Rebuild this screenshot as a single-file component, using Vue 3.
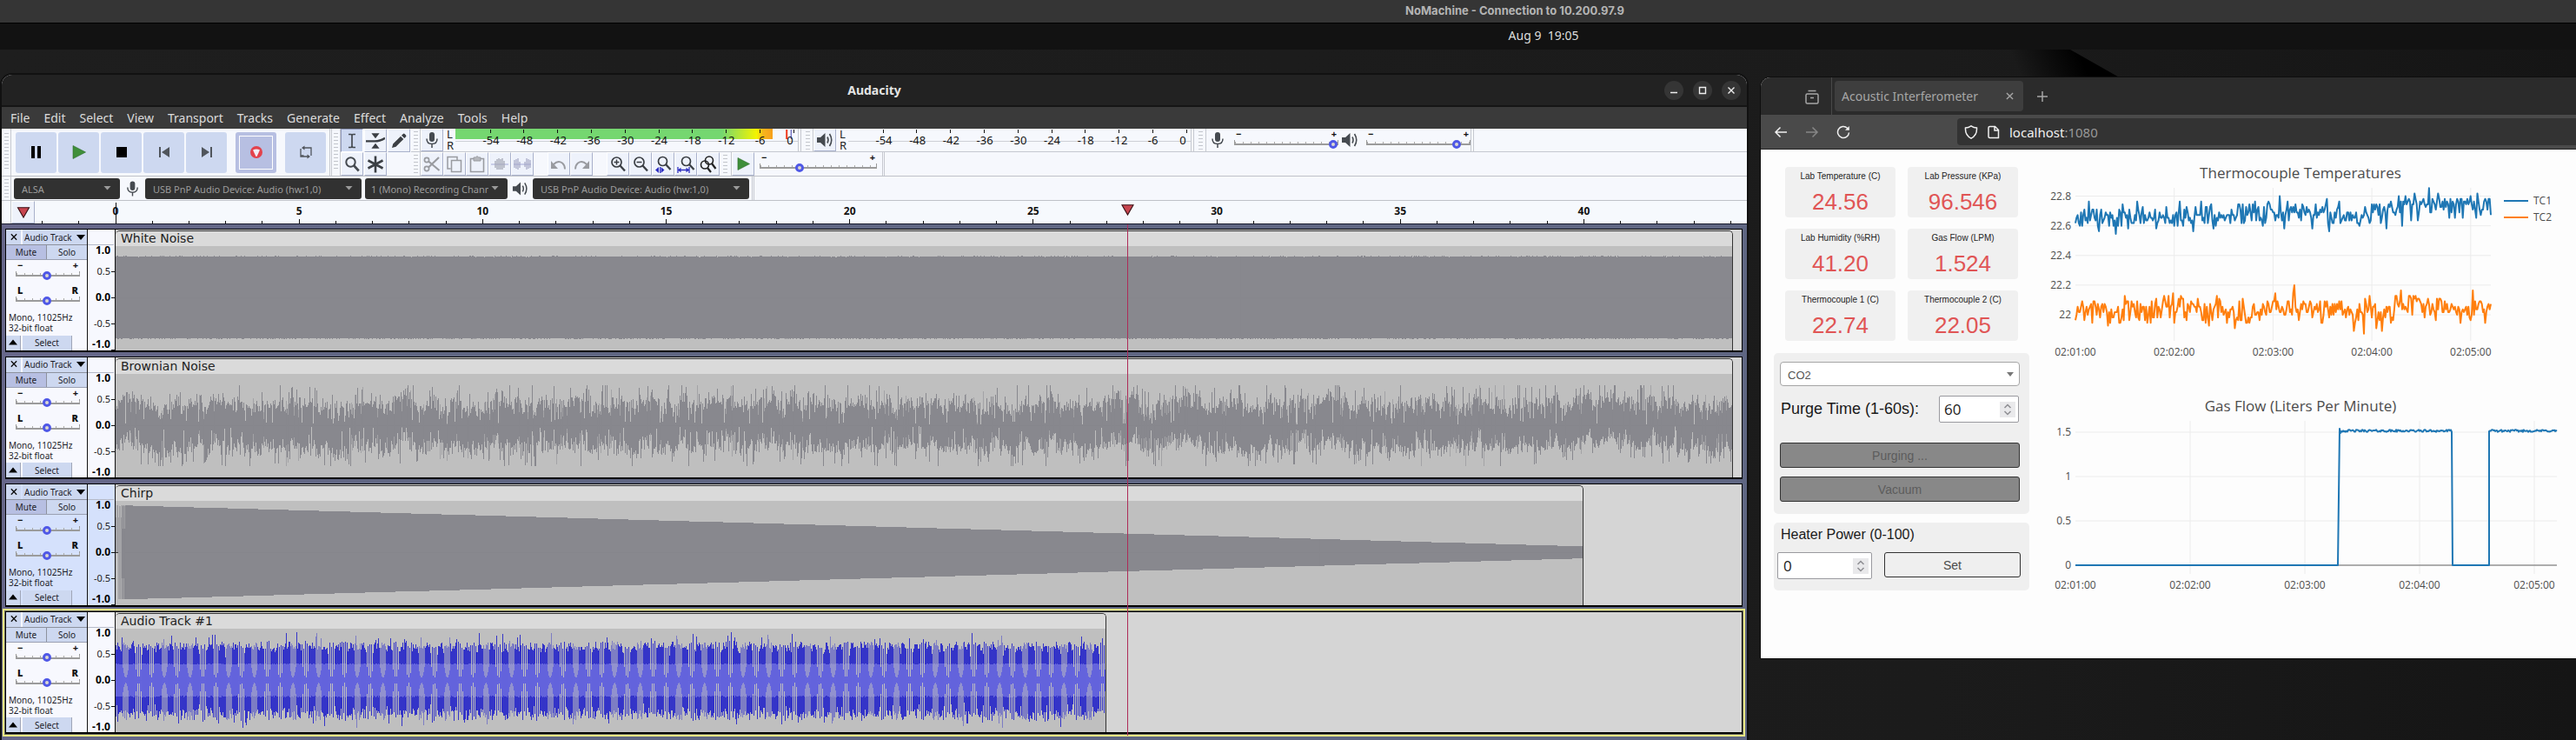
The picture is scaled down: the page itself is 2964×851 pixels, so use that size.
<script setup>
import { ref } from 'vue'

/* ---------- deterministic noise ---------- */
function makeRandom(seed) {
  let s = seed
  return () => {
    s = (s * 1664525 + 1013904223) % 4294967296
    return s / 4294967296
  }
}

/* ---------- Audacity ---------- */
const menus = ['File', 'Edit', 'Select', 'View', 'Transport', 'Tracks', 'Generate', 'Effect', 'Analyze', 'Tools', 'Help']

const transport = [
  { id: 'pause', label: 'Pause' },
  { id: 'play', label: 'Play' },
  { id: 'stop', label: 'Stop' },
  { id: 'start', label: 'Skip to Start' },
  { id: 'end', label: 'Skip to End' },
  { id: 'record', label: 'Record', apart: true, active: true },
  { id: 'loop', label: 'Loop', apart: true }
]
const tools = [
  { id: 'ibeam', label: 'Selection Tool', active: true },
  { id: 'envelope', label: 'Envelope Tool' },
  { id: 'pencil', label: 'Draw Tool' },
  { id: 'lens', label: 'Zoom Tool' },
  { id: 'star', label: 'Multi-Tool' }
]
const editGroups = [
  [
    { id: 'cut', label: 'Cut' },
    { id: 'copy', label: 'Copy' },
    { id: 'paste', label: 'Paste' },
    { id: 'trim', label: 'Trim' },
    { id: 'silence', label: 'Silence' }
  ],
  [
    { id: 'undo', label: 'Undo' },
    { id: 'redo', label: 'Redo' }
  ],
  [
    { id: 'zoomin', label: 'Zoom In' },
    { id: 'zoomout', label: 'Zoom Out' },
    { id: 'zoomsel', label: 'Zoom to Selection' },
    { id: 'zoomfit', label: 'Fit Project' },
    { id: 'zoomtoggle', label: 'Zoom Toggle' }
  ]
]

const meterMarks = [-54, -48, -42, -36, -30, -24, -18, -12, -6, 0].map((db, i) => ({
  db,
  at: ((40 + i * 38.8) / 394) * 100 + '%',
  text: ((db === 0 ? 385 : 41 + i * 38.7) / 394) * 100 + '%'
}))

const SECONDS = 44.3
const pct = (t) => (t / SECONDS) * 100 + '%'
const rulerTicks = Array.from({ length: 47 }, (_, i) => i - 2)
const playhead = 27.57

const verticalScale = [
  { text: '1.0', y: 24, bold: true },
  { text: '0.5', y: 48, tick: 48 },
  { text: '0.0', y: 78, bold: true, tick: 78 },
  { text: '-0.5', y: 108, tick: 108 },
  { text: '-1.0', y: 132, bold: true, tick: 138 }
]

function column(x, up, down) {
  return `M${x}.5 ${(-up).toFixed(1)}V${down.toFixed(1)}`
}

function whiteNoise(n) {
  const r = makeRandom(11)
  let main = ''
  for (let x = 0; x < n; x++) {
    main += column(x, 48 + (r() < 0.12 ? 1 : 0) - (r() < 0.03 ? 1 : 0), 47 + (r() < 0.3 ? 1 : 0))
  }
  return [{ kind: 'muted', d: main }]
}

function brownNoise(n) {
  const r = makeRandom(77)
  let main = ''
  let soft = ''
  let drift = 0
  for (let x = 0; x < n; x++) {
    drift = drift * 0.8 + (r() - 0.5) * 10
    let up = 17 + drift + r() * 15
    let down = 17 - drift + r() * 15
    const a = r()
    if (a < 0.13) up += 6 + r() * 18
    else if (a > 0.87) down += 6 + r() * 16
    if (r() < 0.05) up = 1 + r() * 8
    if (r() < 0.05) down = 1 + r() * 8
    up = Math.max(1, Math.min(47, up))
    down = Math.max(1, Math.min(47, down))
    if (r() < 0.1) {
      soft += column(x, up, down)
      main += column(x, up * 0.5, down * 0.5)
    } else main += column(x, up, down)
  }
  return [{ kind: 'faint', d: soft }, { kind: 'muted', d: main }]
}

function chirp(n) {
  let main = ''
  let soft = ''
  for (let x = 0; x < n; x++) {
    const amp = 55 - (48 * x) / n
    if (x < 11) {
      soft += column(x, x % 3 === 0 ? amp - 14 : x < 3 ? amp : amp - 1, x < 3 ? 0 : amp)
      if (x > 6) main += column(x, x % 2 ? amp : 28, x % 2 ? 30 : amp)
    } else main += column(x, amp, amp)
  }
  return [{ kind: 'faint', d: soft }, { kind: 'muted', d: main }]
}

function beats(n) {
  const r = makeRandom(5)
  let dark = ''
  let pale = ''
  let rms = ''
  let rmsPale = ''
  const period = 14.8
  for (let x = 0; x < n; x++) {
    const beat = Math.floor(x / period)
    const p = x - beat * period
    const blurred = (beat * 7) % 5 < 2
    const solid = p < 7.6
    const edge = solid ? Math.abs(p - 3.8) / 3.8 : 0
    let up = 41 - edge * 11 * r() + (r() - 0.5) * 9
    let down = 41 - edge * 11 * r() + (r() - 0.5) * 12
    if (r() < 0.08) up += 5 + r() * 8
    if (r() < 0.09) down += 4 + r() * 7
    const band = 18 + r() * 2
    if (solid) {
      dark += column(x, up, down)
      rms += column(x, band, band)
      continue
    }
    const q = Math.abs(p - 11.2) / 3.6
    const hollow = 3 + 14 * Math.min(1, q) * q
    if (blurred) {
      pale += column(x, up - 1, down)
      rmsPale += column(x, band, band)
      rms += column(x, hollow, hollow)
    } else if (x % 2 === 0) {
      dark += column(x, up, down)
      rms += column(x, band, band)
    } else {
      rms += column(x, hollow, hollow)
    }
  }
  return [
    { kind: 'dark', d: dark },
    { kind: 'pale', d: pale },
    { kind: 'rms-pale', d: rmsPale },
    { kind: 'rms', d: rms }
  ]
}

const tracks = ref([
  { name: 'White Noise', muted: true, length: 44.07, columns: 1861, waves: whiteNoise(1861) },
  { name: 'Brownian Noise', muted: true, length: 44.07, columns: 1861, waves: brownNoise(1861) },
  { name: 'Chirp', muted: true, selected: true, length: 40, columns: 1689, waves: chirp(1689) },
  { name: 'Audio Track #1', focused: true, length: 27, columns: 1140, waves: beats(1140) }
])

/* ---------- Dashboard ---------- */
const readings = [
  { label: 'Lab Temperature (C)', value: '24.56' },
  { label: 'Lab Pressure (KPa)', value: '96.546' },
  { label: 'Lab Humidity (%RH)', value: '41.20' },
  { label: 'Gas Flow (LPM)', value: '1.524' },
  { label: 'Thermocouple 1 (C)', value: '22.74' },
  { label: 'Thermocouple 2 (C)', value: '22.05' }
]
const gas = ref('CO2')
const purgeTime = ref(60)
const heater = ref(0)

const toPath = (pts) => 'M' + pts.map((p) => p[0].toFixed(1) + ' ' + p[1].toFixed(1)).join('L')

const tempY = (v) => 190 - (v - 22) * 170.5
function thermocouple(seed, base, rise, spikes) {
  const r = makeRandom(seed)
  const pts = []
  const n = 370
  let slow = 0
  for (let i = 0; i <= n; i++) {
    const f = i / n
    slow = slow * 0.8 + (r() - 0.5) * 0.05
    let v = base + slow + (r() + r() + r() - 1.5) * 0.085
    v += rise * Math.min(1, Math.max(0, (f - 0.66) / 0.12))
    for (const [at, to] of spikes) if (Math.abs(f - at) < 0.0014) v = to
    v = Math.round(v * 55) / 55
    pts.push([48 + f * 478, tempY(v)])
  }
  return toPath(pts)
}

const flowY = (v) => 210 - v * 102
function gasFlow() {
  const r = makeRandom(42)
  const pts = [[48, flowY(0)], [350, flowY(0)], [352, flowY(1.54)], [353, flowY(1.49)]]
  for (let x = 354; x <= 481; x++) pts.push([x, flowY(1.515 + (r() - 0.5) * 0.025)])
  pts.push([482, flowY(0)], [524, flowY(0)])
  for (let x = 524; x <= 602; x++) pts.push([x, flowY(1.515 + (r() - 0.5) * 0.025)])
  return toPath(pts)
}

const times = ['02:01:00', '02:02:00', '02:03:00', '02:04:00', '02:05:00']
const charts = [
  {
    title: 'Thermocouple Temperatures',
    right: 526,
    yTicks: [22.8, 22.6, 22.4, 22.2, 22].map((v) => ({ text: String(v), y: tempY(v) })),
    xTicks: times.map((text, i) => ({ text, x: 48 + i * 113.7 })),
    series: [
      { name: 'TC1', kind: 'blue', d: thermocouple(9, 22.67, 0.06, [[0.285, 22.57], [0.61, 22.57], [0.968, 22.81]]) },
      { name: 'TC2', kind: 'orange', d: thermocouple(31, 22.03, 0.02, [[0.528, 22.2], [0.695, 21.88], [0.957, 22.16]]) }
    ],
    legend: true
  },
  {
    title: 'Gas Flow (Liters Per Minute)',
    right: 602,
    zero: flowY(0),
    yTicks: [1.5, 1, 0.5, 0].map((v) => ({ text: String(v), y: flowY(v) })),
    xTicks: times.map((text, i) => ({ text, x: 48 + i * 132 })),
    series: [{ name: 'Flow', kind: 'blue', d: gasFlow() }],
    legend: false
  }
]
</script>

<template>
  <div class="desktop">
    <svg class="sprite" aria-hidden="true">
      <symbol id="pause" viewBox="0 0 16 16"><path d="M2 1h4v14H2zM9 1h4v14H9z" /></symbol>
      <symbol id="play" viewBox="0 0 16 16"><path d="M1 .5 15.5 8 1 15.5z" fill="#3f8f3a" stroke="#2c6b2a" stroke-width=".6" /></symbol>
      <symbol id="stop" viewBox="0 0 16 16"><path d="M2 2h12v12H2z" /></symbol>
      <symbol id="start" viewBox="0 0 16 16"><path d="M2 2h2v12H2zM14 2v12L5 8z" fill="#50555c" /></symbol>
      <symbol id="end" viewBox="0 0 16 16"><path d="M12 2h2v12h-2zM2 2v12l9-6z" fill="#50555c" /></symbol>
      <symbol id="record" viewBox="0 0 16 16">
        <circle cx="8" cy="8" r="7" fill="#e3424c" />
        <path d="M4 5.500q4-2 8 0L8.500 13h-1z" fill="#f3eef6" />
      </symbol>
      <symbol id="loop" viewBox="0 0 16 16">
        <path d="M5 3h9v9M11 13H2V4M5.500 12H2" fill="none" stroke="#50555c" stroke-width="1.300" />
        <path d="M6.500.5v5L3 3zM9.500 10.500v5L13 13z" fill="#50555c" />
      </symbol>
      <symbol id="ibeam" viewBox="0 0 20 20"><path d="M6 2.500h3l1 .8 1-.8h3M6 17.500h3l1-.8 1 .8h3M10 3v14" fill="none" stroke="#454a50" stroke-width="1.700" /></symbol>
      <symbol id="envelope" viewBox="0 0 24 20">
        <path d="M7 .5h10l-5 6.500zM7 19.500h10L12 13z" fill="#3b3f44" />
        <path d="M0 10.500h11q7 0 13-4" fill="none" stroke="#3b3f44" stroke-width="2.500" />
      </symbol>
      <symbol id="pencil" viewBox="0 0 20 20"><path d="M2 18l1.200-4.500L12 4.700 15.300 8 6.500 16.800zM13 3.700l1.800-1.800q1-.6 1.800 0l1.500 1.500q.6 1 0 1.800L16.300 7z" fill="#3b3f44" /></symbol>
      <symbol id="lens" viewBox="0 0 20 20"><circle cx="8.500" cy="7.500" r="5.200" fill="none" stroke="#454a50" stroke-width="2" /><path d="M12.300 11.500l5.500 6" stroke="#454a50" stroke-width="2.600" /></symbol>
      <symbol id="star" viewBox="0 0 20 20"><path d="M10 .5v19M1.500 5.500l17 9M18.500 5.500l-17 9" stroke="#3b3f44" stroke-width="2.600" /></symbol>
      <symbol id="mic" viewBox="0 0 20 20">
        <rect x="7" y="1" width="6" height="11" rx="3" fill="#454a50" />
        <path d="M4 8.500q0 6 6 6t6-6M10 14.500V19" fill="none" stroke="#454a50" stroke-width="1.500" />
      </symbol>
      <symbol id="speaker" viewBox="0 0 20 20">
        <path d="M1 7h4l5.500-5v16L5 13H1z" fill="#454a50" />
        <path d="M13 6.500q2 3.500 0 7M15.500 3q4.500 7 0 14" fill="none" stroke="#454a50" stroke-width="1.600" />
      </symbol>
      <symbol id="cut" viewBox="0 0 20 20">
        <g fill="none" stroke="#999ba0"><circle cx="4" cy="5" r="2.600" stroke-width="1.700" /><circle cx="4" cy="15" r="2.600" stroke-width="1.700" /><path d="M6 6.500 18.500 17M6 13.500 18 2" stroke-width="2.200" /></g>
      </symbol>
      <symbol id="copy" viewBox="0 0 20 20"><path d="M13 5V1.500H2V15h3.500M6.500 5.500h11v13h-11z" fill="none" stroke="#999ba0" stroke-width="1.500" /></symbol>
      <symbol id="paste" viewBox="0 0 20 20"><path d="M6 3.500H2.500v15h15v-15H14" fill="none" stroke="#999ba0" stroke-width="1.600" /><path d="M6 2h2.500q1.500-3 3 0H14v4H6z" fill="#b5b7bc" stroke="#999ba0" stroke-width="1" /></symbol>
      <symbol id="trim" viewBox="0 0 20 20"><path d="M0 10h20" stroke="#a3a9d6" /><path d="M5 6v8M7 4v12M9 3v13M11 4v12M13 3v13M15 6v8" stroke="#a4a6b4" stroke-width="1.300" /></symbol>
      <symbol id="silence" viewBox="0 0 20 20"><path d="M0 10h20" stroke="#a3a9d6" /><path d="M1 5v9M3 4v11M5 3v13M7 7v7M13 7v6M15 3v13M17 4v11M19 5v9" stroke="#a4a6c4" stroke-width="1.200" /></symbol>
      <symbol id="undo" viewBox="0 0 20 20"><path d="M4 10q5-5 10-1.500 3 2.500 3 7" fill="none" stroke="#999ba0" stroke-width="1.900" /><path d="M1 6v9h8z" fill="#999ba0" /></symbol>
      <symbol id="redo" viewBox="0 0 20 20"><path d="M16 10q-5-5-10-1.500-3 2.500-3 7" fill="none" stroke="#999ba0" stroke-width="1.900" /><path d="M19 6v9h-8z" fill="#999ba0" /></symbol>
      <symbol id="zoomin" viewBox="0 0 20 20"><circle cx="8.500" cy="7.500" r="5.500" fill="none" stroke="#3b3f44" stroke-width="1.700" /><path d="M12.500 11.500l5.500 6" stroke="#3b3f44" stroke-width="2.400" /><path d="M5.500 7.500h6M8.500 4.500v6" stroke="#3b3f44" stroke-width="1.500" /></symbol>
      <symbol id="zoomout" viewBox="0 0 20 20"><circle cx="8.500" cy="7.500" r="5.500" fill="none" stroke="#3b3f44" stroke-width="1.700" /><path d="M12.500 11.500l5.500 6" stroke="#3b3f44" stroke-width="2.400" /><path d="M5.500 7.500h6" stroke="#3b3f44" stroke-width="1.500" /></symbol>
      <symbol id="zoomsel" viewBox="0 0 20 20"><circle cx="9.500" cy="6.500" r="5" fill="none" stroke="#3b3f44" stroke-width="1.700" /><path d="M13 10l5.500 6" stroke="#3b3f44" stroke-width="2.300" /><path d="M1 16.500l4-3.500v7zM7.500 13l4 3.500-4 3.500zM6 13h1v7H6z" fill="#2c2cc0" /></symbol>
      <symbol id="zoomfit" viewBox="0 0 20 20"><circle cx="10.500" cy="6.500" r="5" fill="none" stroke="#3b3f44" stroke-width="1.700" /><path d="M14 10l5.500 6" stroke="#3b3f44" stroke-width="2.300" /><path d="M1 13v7M14 13v7M2 16.500h11M4.500 14.500l-2.500 2 2.500 2M10.500 14.500l2.500 2-2.500 2" fill="none" stroke="#2c2cc0" stroke-width="1.300" /></symbol>
      <symbol id="zoomtoggle" viewBox="0 0 20 20"><g fill="none" stroke="#222"><circle cx="11" cy="5.500" r="4.500" stroke-width="1.600" /><circle cx="6" cy="10.500" r="4.500" stroke-width="1.600" /><path d="M14 9l4.500 6M9 14l4 5" stroke-width="2.200" /></g></symbol>
      <symbol id="pin" viewBox="0 0 16 14"><path d="M1 .8h14L8 13z" fill="#c8454f" stroke="#3a1216" stroke-width="1.200" /></symbol>
    </svg>

    <header class="host-bar">NoMachine - Connection to 10.200.97.9</header>
    <div class="top-panel"><span class="clock">Aug 9&nbsp; 19:05</span></div>

    <main class="workspace">
      <svg class="wallpaper" viewBox="0 0 170 34" aria-hidden="true">
        <defs>
          <linearGradient id="streak" gradientUnits="userSpaceOnUse" x1="0" y1="0" x2="66" y2="-28">
            <stop offset="0" stop-color="#000" stop-opacity="0" />
            <stop offset="1" stop-color="#000" />
          </linearGradient>
        </defs>
        <path d="M0 0H70L130 34H0z" fill="url(#streak)" />
      </svg>

      <!-- Audacity -->
      <section class="audacity">
        <header class="titlebar">
          <h1>Audacity</h1>
          <div class="win-buttons">
            <button aria-label="Minimize"><svg viewBox="0 0 22 22"><path d="M7 13.500h8" /></svg></button>
            <button aria-label="Maximize"><svg viewBox="0 0 22 22"><path d="M7.500 7.500h7v7h-7z" /></svg></button>
            <button aria-label="Close"><svg viewBox="0 0 22 22"><path d="M7.500 7.500l7 7M14.500 7.500l-7 7" /></svg></button>
          </div>
        </header>

        <nav class="menubar">
          <button v-for="m in menus" :key="m">{{ m }}</button>
        </nav>

        <div class="toolbars">
          <div class="bar transport">
            <i class="grip"></i>
            <div class="transport-buttons">
              <button v-for="b in transport" :key="b.id" :aria-label="b.label" :class="{ apart: b.apart, active: b.active }">
                <svg><use :href="'#' + b.id" /></svg>
              </button>
            </div>
            <i class="end"></i>
          </div>

          <div class="bar tools">
            <i class="grip"></i>
            <div class="tool-grid">
              <button v-for="t in tools" :key="t.id" class="cell" :class="{ active: t.active }" :aria-label="t.label">
                <svg><use :href="'#' + t.id" /></svg>
              </button>
            </div>
          </div>

          <div class="stack">
            <div class="row upper">
              <template v-for="kind in ['mic', 'speaker']" :key="kind">
                <i class="grip"></i>
                <button class="cell" :aria-label="kind + ' meter'"><svg><use :href="'#' + kind" /></svg></button>
                <span class="lr"><b>L</b><b>R</b></span>
                <div class="meter">
                  <div v-if="kind === 'mic'" class="level"></div>
                  <svg class="scale">
                    <line class="mid" x1="0" x2="100%" y1="14" y2="14" />
                    <template v-if="kind === 'mic'">
                      <rect x="96.500%" y="1" width="2" height="11" fill="#f03a1c" />
                      <rect x="97.900%" y="1" width="1" height="11" fill="#4444b0" />
                    </template>
                    <g v-for="m in meterMarks" :key="m.db">
                      <line :x1="m.at" :x2="m.at" y1="1" y2="5" />
                      <text :x="m.text" y="18">{{ m.db }}</text>
                    </g>
                  </svg>
                </div>
                <i class="end"></i>
              </template>
              <i class="grip"></i>
              <svg class="inline-icon"><use href="#mic" /></svg>
              <label class="slider wide"><span class="ends"><b>−</b><b>+</b></span><input type="range" min="0" max="100" value="99" aria-label="Recording volume" /></label>
              <svg class="inline-icon"><use href="#speaker" /></svg>
              <label class="slider wide"><span class="ends"><b>−</b><b>+</b></span><input type="range" min="0" max="100" value="90" aria-label="Playback volume" /></label>
              <i class="end"></i>
            </div>
            <div class="row lower">
              <i class="grip"></i>
              <div v-for="(g, i) in editGroups" :key="i" class="group">
                <button v-for="b in g" :key="b.id" class="cell" :aria-label="b.label"><svg><use :href="'#' + b.id" /></svg></button>
              </div>
              <i class="grip"></i>
              <button class="cell" aria-label="Play at speed"><svg class="small"><use href="#play" /></svg></button>
              <label class="slider speed"><span class="ends"><b>−</b><b>+</b></span><input type="range" min="0" max="100" value="33" aria-label="Playback speed" /></label>
              <i class="end"></i>
            </div>
          </div>
        </div>

        <div class="devices">
          <i class="grip"></i>
          <span class="device host"><select aria-label="Audio host"><option>ALSA</option></select></span>
          <svg class="device-icon"><use href="#mic" /></svg>
          <span class="device card"><select aria-label="Recording device"><option>USB PnP Audio Device: Audio (hw:1,0)</option></select></span>
          <span class="device channels"><select aria-label="Recording channels"><option>1 (Mono) Recording Channel</option></select></span>
          <svg class="device-icon"><use href="#speaker" /></svg>
          <span class="device card"><select aria-label="Playback device"><option>USB PnP Audio Device: Audio (hw:1,0)</option></select></span>
          <i class="end"></i>
        </div>

        <div class="ruler">
          <i class="grip plain"></i>
          <button class="cell pin" aria-label="Pinned play head"><svg><use href="#pin" /></svg></button>
          <div class="time-scale">
            <svg class="ticks">
              <line x1="0" x2="0" y1="2" y2="26" />
              <template v-for="t in rulerTicks" :key="t">
                <line :x1="pct(t)" :x2="pct(t)" :y1="t % 5 === 0 ? 21 : 23" y2="26" />
                <text v-if="t % 5 === 0 && t >= 0" :x="pct(t)" y="16">{{ t }}</text>
              </template>
            </svg>
            <svg class="head" :style="{ left: pct(playhead) }"><use href="#pin" /></svg>
          </div>
        </div>

        <div class="tracks">
          <article v-for="t in tracks" :key="t.name" class="track" :class="{ selected: t.selected, focused: t.focused }">
            <div class="panel">
              <div class="panel-top">
                <button aria-label="Close track"><svg viewBox="0 0 10 10"><path d="M1.500 1.500l7 7M8.500 1.500l-7 7" stroke="#111" stroke-width="1.500" /></svg></button>
                <button class="name">Audio Track<svg viewBox="0 0 10 6"><path d="M0 0h10L5 6z" /></svg></button>
              </div>
              <div class="mute-solo">
                <button :class="{ on: t.muted }">Mute</button>
                <button>Solo</button>
              </div>
              <label class="slider gain"><span class="ends"><b>−</b><b>+</b></span><input type="range" min="0" max="100" value="48" :aria-label="t.name + ' gain'" /></label>
              <label class="slider pan"><span class="ends"><b>L</b><b>R</b></span><input type="range" min="0" max="100" value="48" :aria-label="t.name + ' pan'" /></label>
              <p>Mono, 11025Hz<br />32-bit float</p>
              <div class="panel-bottom">
                <button aria-label="Collapse track"><svg viewBox="0 0 10 6"><path d="M0 6h10L5 0z" /></svg></button>
                <button class="select">Select</button>
              </div>
            </div>
            <svg class="vscale">
              <line class="rule" x1="0" x2="30" y1="17" y2="17" />
              <g v-for="s in verticalScale" :key="s.text">
                <text x="26" :y="s.y + 4" :class="{ bold: s.bold }">{{ s.text }}</text>
                <line v-if="s.tick" x1="27" x2="31" :y1="s.tick" :y2="s.tick" />
              </g>
            </svg>
            <div class="lane">
              <div class="clip" :style="{ width: pct(t.length) }">
                <h2>{{ t.name }}</h2>
                <svg class="wave" :viewBox="`0 -60 ${t.columns} 121`" preserveAspectRatio="none">
                  <line x1="0" :x2="t.columns" y1="0" y2="0" stroke="#333" />
                  <path v-for="w in t.waves" :key="w.kind" :class="w.kind" :d="w.d" />
                </svg>
              </div>
            </div>
          </article>
          <div class="cursor-lane"><i :style="{ left: pct(playhead) }"></i></div>
        </div>
      </section>

      <!-- Browser -->
      <section class="browser">
        <div class="tabs">
          <button class="recent" aria-label="Recent browsing">
            <svg viewBox="0 0 18 18"><path d="M4.500 1.500h9M2 6.500q0-1.500 1.500-1.500h11q1.500 0 1.500 1.500v8q0 1.500-1.500 1.500h-11Q2 16 2 14.500zM7 9.500h4" /></svg>
          </button>
          <div class="tab">
            <span>Acoustic Interferometer</span>
            <button aria-label="Close tab"><svg viewBox="0 0 10 10"><path d="M1 1l8 8M9 1L1 9" /></svg></button>
          </div>
          <button class="new-tab" aria-label="New tab"><svg viewBox="0 0 12 12"><path d="M6 0v12M0 6h12" /></svg></button>
        </div>
        <div class="nav">
          <button aria-label="Back"><svg viewBox="0 0 16 16"><path d="M15 8H2M7.500 2.500L2 8l5.500 5.500" /></svg></button>
          <button aria-label="Forward" disabled><svg viewBox="0 0 16 16"><path d="M1 8h13M8.500 2.500L14 8l-5.500 5.500" /></svg></button>
          <button aria-label="Reload"><svg viewBox="0 0 16 16"><path d="M14.500 8.500A6.500 6.500 0 1 1 12.500 3.300L14 5" /><path d="M14.800 1v4.800H10z" fill="#f0f0f0" stroke="none" /></svg></button>
          <div class="url">
            <svg viewBox="0 0 16 16"><path d="M8 .8Q5 2.800 1.500 3q-.6 8.500 6.500 12.200Q15.100 11.500 14.500 3 11 2.800 8 .8z" /></svg>
            <svg viewBox="0 0 16 16"><path d="M3.500 1.500h6l4 4v9h-10q-1.500 0-1.500-1.500V3q0-1.500 1.500-1.500zM9 1.500v4.500h4.500" /></svg>
            <span>localhost<em>:1080</em></span>
          </div>
        </div>

        <div class="page">
          <div class="controls">
            <div class="readings">
              <div v-for="r in readings" :key="r.label" class="reading">
                <span>{{ r.label }}</span>
                <strong>{{ r.value }}</strong>
              </div>
            </div>
            <form class="box purge" @submit.prevent>
              <span class="gas"><select v-model="gas" aria-label="Gas"><option>CO2</option></select></span>
              <div class="field">
                <label for="purge-time">Purge Time (1-60s):</label>
                <span class="number">
                  <input id="purge-time" v-model="purgeTime" type="number" min="1" max="60" />
                  <svg viewBox="0 0 18 18"><path d="M5.500 7L9 3.500 12.500 7M5.500 11L9 14.500l3.500-3.500" /></svg>
                </span>
              </div>
              <button disabled>Purging ...</button>
              <button disabled>Vacuum</button>
            </form>
            <form class="box heater" @submit.prevent>
              <label for="heater">Heater Power (0-100)</label>
              <div class="heater-row">
                <span class="number">
                  <input id="heater" v-model="heater" type="number" min="0" max="100" />
                  <svg viewBox="0 0 18 18"><path d="M5.500 7L9 3.500 12.500 7M5.500 11L9 14.500l3.500-3.500" /></svg>
                </span>
                <button>Set</button>
              </div>
            </form>
          </div>

          <div class="charts">
            <svg v-for="c in charts" :key="c.title" class="chart" viewBox="0 0 624 268" role="img" :aria-label="c.title">
              <text class="title" x="307" y="33">{{ c.title }}</text>
              <g class="grid">
                <line v-for="y in c.yTicks" :key="y.text" x1="48" :x2="c.right" :y1="y.y" :y2="y.y" />
                <line v-for="x in c.xTicks.slice(1)" :key="x.text" :x1="x.x" :x2="x.x" y1="44" y2="220" />
              </g>
              <line v-if="c.zero" class="zero" x1="48" :x2="c.right" :y1="c.zero" :y2="c.zero" />
              <text v-for="y in c.yTicks" :key="y.text" class="ylabel" x="43" :y="y.y + 4">{{ y.text }}</text>
              <text v-for="x in c.xTicks" :key="x.text" class="xlabel" :x="x.x" y="237">{{ x.text }}</text>
              <path v-for="s in c.series" :key="s.name" :class="['line', s.kind]" :d="s.d" />
              <template v-if="c.legend">
                <g v-for="(s, i) in c.series" :key="s.name">
                  <line :class="['line', s.kind]" x1="541" x2="569" :y1="59 + i * 19" :y2="59 + i * 19" />
                  <text x="575" :y="63 + i * 19">{{ s.name }}</text>
                </g>
              </template>
            </svg>
          </div>
        </div>
      </section>
    </main>
  </div>
</template>

<style>
body {
  background: #1b1b1b;
}
</style>

<style scoped>
* {
  box-sizing: border-box;
}
button,
select,
input {
  font: inherit;
  margin: 0;
  padding: 0;
  border: 0;
  color: inherit;
  background: none;
  border-radius: 0;
}
h1,
h2,
p {
  margin: 0;
}
.desktop {
  display: flex;
  flex-direction: column;
  height: 100vh;
  overflow: hidden;
  background: linear-gradient(90deg, #1e1e1e, #1b1b1b 75%, #151515);
  font-family: "Noto Sans", "Open Sans", sans-serif;
}
.sprite {
  position: absolute;
  width: 0;
  height: 0;
}
.host-bar {
  flex: none;
  height: 27px;
  padding-left: 522px;
  border-bottom: 1px solid #000;
  background: #353535;
  color: #b4b4b4;
  font: 700 13px/24px Inter, sans-serif;
  text-align: center;
}
.top-panel {
  flex: none;
  height: 30px;
  background: #121212;
  color: #ddd;
  font-size: 14px;
  line-height: 28px;
  text-align: center;
  padding-left: 588px;
}
.workspace {
  position: relative;
  flex: 1;
  min-height: 0;
  display: flex;
  align-items: flex-start;
  gap: 16px;
  padding-left: 2px;
}
.wallpaper {
  position: absolute;
  left: 78%;
  top: 0;
  width: 170px;
}

/* Audacity window */
.audacity {
  position: relative;
  flex: 2008 1 0;
  min-width: 0;
  align-self: stretch;
  margin-top: 29px;
  display: flex;
  flex-direction: column;
  border-radius: 12px 12px 0 0;
  background: #f6f8fd;
  overflow: hidden;
  box-shadow: 0 0 0 2px #111;
}
.titlebar {
  position: relative;
  flex: none;
  height: 37px;
  background: #222;
  border-bottom: 2px solid #151515;
  color: #e4e4e4;
  text-align: center;
}
.titlebar h1 {
  font-size: 14px;
  font-weight: 700;
  line-height: 35px;
}
.win-buttons {
  position: absolute;
  right: 7px;
  top: 7px;
  display: flex;
  gap: 11px;
}
.win-buttons button {
  width: 22px;
  height: 22px;
  border-radius: 50%;
  background: #353535;
}
.win-buttons svg {
  display: block;
  fill: none;
  stroke: #eee;
  stroke-width: 1.400;
}
.menubar {
  flex: none;
  display: flex;
  gap: 16px;
  height: 25px;
  padding-left: 10px;
  background: #3a3a3a;
  color: #dcdcdc;
  font-size: 14px;
  line-height: 24px;
}
.toolbars {
  flex: none;
  display: flex;
  height: 55px;
  border-bottom: 1px solid #bfc2c8;
}
.bar {
  display: flex;
  align-items: stretch;
}
.grip {
  flex: none;
  align-self: stretch;
  width: 11px;
  border-right: 1px solid #c6c9d0;
  background: repeating-linear-gradient(#c2c5cb 0 1px, transparent 1px 4px) center / 5px 80% no-repeat;
}
.grip.plain {
  background: none;
}
.end {
  flex: none;
  align-self: stretch;
  width: 3px;
  border: solid #c6c9d0;
  border-width: 0 1px;
}
.transport-buttons {
  display: flex;
  align-items: center;
  gap: 2px;
  padding: 0 4px 0 5px;
}
.transport-buttons button {
  display: grid;
  place-items: center;
  width: 47px;
  height: 47px;
  border-radius: 3px;
  background: #cdd8f0;
}
.transport-buttons .apart {
  margin-left: 8px;
}
.transport-buttons .active {
  background: #b7bfe2;
  outline: 1px solid #fff;
  outline-offset: -5px;
}
.transport-buttons svg {
  width: 16px;
  height: 16px;
}
.tools .grip {
  width: 10px;
}
.tool-grid {
  display: grid;
  grid-template-columns: repeat(3, 27px);
  grid-template-rows: 27px 27px;
}
.cell {
  flex: none;
  display: grid;
  place-items: center;
  width: 26px;
  height: 100%;
  background: #eef2fb;
  border: 1px solid;
  border-color: #fff #a9b1cb #a9b1cb #fff;
}
.cell.active {
  background: #cdd8f0;
  border-color: #8f98b8 #fff #fff #8f98b8;
}
.cell svg {
  width: 22px;
  height: 20px;
}
.cell svg.small {
  width: 15px;
  height: 15px;
}
.stack {
  flex: 1;
  display: flex;
  flex-direction: column;
}
.row {
  display: flex;
  height: 27px;
  align-items: stretch;
}
.upper {
  border-bottom: 1px solid #c6c9d0;
}
.lr {
  width: 14px;
  padding-left: 4px;
  display: flex;
  flex-direction: column;
  font-size: 13px;
  line-height: 13px;
  color: #222;
}
.lr b {
  font-weight: 400;
}
.meter {
  position: relative;
  width: 394px;
}
.level {
  width: 365px;
  height: 12px;
  background: linear-gradient(90deg, #75d770 84%, #f4f400 95%, #f7b51c 97%, #f7a01c);
}
.scale {
  position: absolute;
  inset: 0;
  width: 100%;
  height: 26px;
  overflow: visible;
  font-size: 13px;
  text-anchor: middle;
  fill: #111;
}
.scale line,
.ticks line,
.vscale line {
  stroke: #111;
  shape-rendering: crispEdges;
}
.scale .mid {
  stroke: #cdd0d6;
}
.upper .end {
  width: 4px;
  margin-right: 1px;
}
.upper .grip:not(:first-child) {
  width: 13px;
}
.inline-icon {
  width: 20px;
  height: 20px;
  margin: 3px 3px;
}
.slider {
  display: block;
  width: 120px;
}
.slider .ends {
  display: flex;
  justify-content: space-between;
  height: 10px;
  padding: 0 2px;
  font-size: 11px;
  line-height: 12px;
  color: #111;
}
.slider.wide {
  margin-left: 6px;
}
.slider.speed {
  width: 135px;
  margin: 0 6px;
}
.slider input {
  display: block;
  appearance: none;
  width: 100%;
  height: 12px;
  background:
    linear-gradient(#9b9b9b, #9b9b9b) 0 7px / 100% 2px no-repeat,
    repeating-linear-gradient(90deg, #aaa 0 1px, transparent 1px 9px) 1px 5px / 100% 2px no-repeat,
    linear-gradient(90deg, #999 1px, transparent 1px calc(100% - 1px), #999 calc(100% - 1px)) 0 3px / 100% 5px no-repeat;
}
.slider input::-webkit-slider-thumb {
  appearance: none;
  width: 10px;
  height: 10px;
  border: 3px solid #4f58e6;
  border-radius: 50%;
  background: #dcd8d0;
  margin-top: 3px;
}
.lower .group {
  display: flex;
}
.lower .group + .group {
  margin-left: 16px;
}
.lower .group + .grip {
  width: 14px;
}
.devices {
  flex: none;
  display: flex;
  align-items: center;
  height: 28px;
  border-bottom: 1px solid #bfc2c8;
}
.device {
  position: relative;
  flex: none;
  height: 24px;
}
.device::after {
  content: "";
  position: absolute;
  right: 10px;
  top: 9px;
  width: 9px;
  height: 5px;
  background: #9a9a9a;
  clip-path: polygon(0 0, 100% 0, 50% 100%);
}
.device select {
  appearance: none;
  width: 100%;
  height: 24px;
  padding: 2px 22px 0 9px;
  border-radius: 3px;
  background: #313131;
  color: #9c9c9c;
  font-size: 11px;
}
.host {
  width: 122px;
  margin-left: 3px;
}
.card {
  width: 249px;
}
.channels {
  width: 164px;
  margin-left: 4px;
}
.channels select {
  padding: 2px 22px 0 7px;
}
.device-icon {
  width: 19px;
  height: 20px;
  margin: 0 5px;
}
.devices .end {
  margin-left: 3px;
}
.ruler {
  flex: none;
  display: flex;
  height: 27px;
  padding-right: 6px;
  border-bottom: 1px solid #16182a;
  background: #f6f9fd;
}
.pin {
  width: 27px;
}
.pin svg {
  width: 16px;
  height: 13px;
}
.time-scale {
  position: relative;
  flex: 1;
  margin-left: 93px;
}
.ticks {
  display: block;
  width: 100%;
  height: 26px;
  overflow: visible;
  font: 700 12px "Open Sans", sans-serif;
  text-anchor: middle;
  fill: #111;
}
.head {
  position: absolute;
  top: 4px;
  width: 15px;
  height: 13px;
  margin-left: -7px;
}
.tracks {
  position: relative;
  flex: 1;
  display: flex;
  flex-direction: column;
  gap: 5px;
  min-height: 0;
  padding: 5px 5px 7px 4px;
  background: linear-gradient(90deg, #67678a, #5f6682 25%);
}
.track {
  flex: 1;
  min-height: 0;
  display: flex;
  border: 1px solid #000;
  border-bottom-width: 2px;
  background: #f7f8fe;
}
.track.selected {
  background: #d5e1fc;
}
.track.focused {
  box-shadow: 0 0 0 1px #6b6b60, 0 0 0 3px #e9e885;
}
.panel {
  flex: none;
  width: 94px;
  border-right: 1px solid #111;
  display: flex;
  flex-direction: column;
  font-size: 10px;
  line-height: 16px;
  color: #1c1c28;
}
.panel button {
  background: #cdd8f0;
}
.panel-top {
  display: flex;
  height: 18px;
  border-bottom: 1px solid #8d929e;
  gap: 2px;
}
.panel-top button {
  width: 17px;
}
.panel-top svg,
.panel-bottom svg {
  width: 10px;
  height: 9px;
}
.panel-top .name {
  flex: 1;
  display: flex;
  align-items: center;
  justify-content: space-between;
  padding: 0 2px;
  white-space: nowrap;
}
.panel-top .name svg {
  height: 6px;
}
.mute-solo {
  display: flex;
  gap: 1px;
  height: 17px;
  border-bottom: 1px solid #9aa0b2;
  background: #8d929e;
}
.mute-solo button {
  flex: 1;
}
.mute-solo .on {
  background: #b7bfe2;
}
.panel .slider {
  width: 74px;
  margin: 0 0 0 11px;
}
.panel .slider.pan {
  margin-top: 7px;
  font-weight: 700;
}
.panel p {
  margin: 9px 0 0 3px;
  line-height: 12px;
  white-space: nowrap;
}
.panel-bottom {
  display: flex;
  gap: 2px;
  margin-top: auto;
  height: 17px;
}
.panel-bottom button {
  width: 17px;
  border-right: 1px solid #a0a6b8;
}
.panel-bottom .select {
  width: 57px;
}
.vscale {
  flex: none;
  width: 32px;
  height: 100%;
  border-right: 1px solid #111;
  overflow: hidden;
  font-size: 11px;
  text-anchor: end;
  fill: #222;
}
.vscale .bold {
  font-size: 12px;
  font-weight: 700;
  fill: #000;
}
.vscale .rule {
  stroke: #b5bac8;
}
.lane {
  flex: 1;
  min-width: 0;
  display: flex;
  padding-top: 1px;
  background: #d5d5d5;
}
.clip {
  display: flex;
  flex-direction: column;
  height: 100%;
  border: 1px solid #333;
  border-width: 1px 1px 0 0;
  border-radius: 5px 5px 0 0;
  background: #bfbfbf;
  overflow: hidden;
}
.clip h2 {
  flex: none;
  height: 17px;
  padding-left: 6px;
  background: #dadada;
  color: #222;
  font: 400 14px/17px "DejaVu Sans", sans-serif;
}
.wave {
  flex: 1;
  min-height: 0;
  width: 100%;
  shape-rendering: crispEdges;
}
.wave path {
  stroke-width: 1;
  fill: none;
}
.muted {
  stroke: #87878d;
}
.faint {
  stroke: #a2a2a5;
}
.dark {
  stroke: #3232c8;
}
.pale {
  stroke: #7c7cc4;
}
.rms {
  stroke: #6464dc;
}
.rms-pale {
  stroke: #9292ce;
}
.cursor-lane {
  position: absolute;
  top: 0;
  bottom: 5px;
  left: 131px;
  right: 6px;
  pointer-events: none;
}
.cursor-lane i {
  position: absolute;
  top: 0;
  bottom: 0;
  width: 1px;
  background: #ad2c58;
}

/* Browser window */
.browser {
  position: relative;
  flex: 938 1 0;
  min-width: 0;
  margin-top: 32px;
  border-radius: 11px 0 0 0;
  background: #fdfdfd;
  overflow: hidden;
  box-shadow: 0 0 0 1px #0e0e0e;
}
.tabs {
  display: flex;
  align-items: center;
  height: 43px;
  background: #2b2b2b;
  color: #a6a6a6;
}
.browser svg {
  fill: none;
  stroke: currentColor;
  stroke-width: 1.500;
}
.recent {
  align-self: stretch;
  width: 82px;
  padding-left: 50px;
  border-right: 1px solid #484848;
  text-align: left;
}
.recent svg {
  width: 18px;
  height: 18px;
  vertical-align: middle;
}
.tab {
  display: flex;
  align-items: center;
  justify-content: space-between;
  width: 217px;
  height: 35px;
  margin-left: 3px;
  padding: 0 11px 0 8px;
  border-radius: 4px;
  background: #3e3e3e;
  font-size: 14px;
}
.tab button,
.new-tab {
  display: flex;
}
.tab svg {
  width: 9px;
  height: 9px;
}
.new-tab {
  margin-left: 16px;
}
.new-tab svg {
  width: 12px;
  height: 12px;
}
.nav {
  display: flex;
  align-items: center;
  height: 40px;
  padding-left: 15px;
  background: #4a4a4a;
  border-bottom: 1px solid #222;
  color: #f0f0f0;
}
.nav button {
  display: flex;
  margin-right: 20px;
}
.nav button:disabled {
  color: #868686;
}
.nav svg {
  width: 16px;
  height: 16px;
}
.url {
  flex: 1;
  display: flex;
  align-items: center;
  gap: 10px;
  height: 31px;
  margin-left: 103px;
  padding-left: 8px;
  border-radius: 4px 0 0 4px;
  background: #333;
  font-size: 15px;
}
.url em {
  font-style: normal;
  color: #999;
}
.page {
  display: flex;
  gap: 5px;
  padding-bottom: 49px;
  font-family: "Liberation Sans", Arial, sans-serif;
}
.controls {
  flex: none;
  width: 309px;
  padding: 20px 0 0 15px;
}
.readings {
  display: grid;
  grid-template-columns: 1fr 1fr;
  gap: 13px 14px;
  padding: 0 13px;
}
.reading {
  height: 58px;
  padding-top: 4px;
  border-radius: 4px;
  background: #f0f0f0;
  text-align: center;
}
.reading span {
  display: block;
  color: #1e1e1e;
  font-size: 10px;
  line-height: 14px;
}
.reading strong {
  display: block;
  color: #e05555;
  font-size: 26px;
  font-weight: 400;
  line-height: 44px;
}
.box {
  border-radius: 5px;
  background: #efefef;
  color: #1a1a1a;
}
.purge {
  margin-top: 14px;
  height: 185px;
  padding: 10px 11px 0 7px;
}
.gas {
  position: relative;
  display: block;
}
.gas::after {
  content: "";
  position: absolute;
  right: 7px;
  top: 12px;
  width: 8px;
  height: 5px;
  background: #777;
  clip-path: polygon(0 0, 100% 0, 50% 100%);
}
.gas select {
  appearance: none;
  display: block;
  width: 100%;
  height: 28px;
  padding: 2px 8px 0;
  border: 1px solid #a5a5a5;
  border-radius: 4px;
  background: #fff;
  color: #555;
  font-size: 13px;
}
.field {
  display: flex;
  align-items: center;
  justify-content: space-between;
  height: 31px;
  margin: 11px 1px 23px 1px;
  font-size: 18px;
}
.number {
  position: relative;
  display: block;
  width: 92px;
}
.number input {
  appearance: textfield;
  display: block;
  width: 100%;
  height: 31px;
  padding-left: 5px;
  border: 1px solid #9a9a9f;
  border-radius: 2px;
  background: #fff;
  font: 17px "Open Sans", sans-serif;
}
.number input::-webkit-inner-spin-button {
  display: none;
}
.number svg {
  position: absolute;
  right: 4px;
  top: 7px;
  width: 18px;
  height: 18px;
  background: #e9e9eb;
  color: #8e8e93;
}
.box button {
  display: block;
  width: 100%;
  height: 29px;
  margin-bottom: 10px;
  border: 1px solid #333;
  border-radius: 3px;
  font-size: 14px;
  color: #4a4a4a;
}
.box button:disabled {
  background: #888;
  color: #5c5c5c;
}
.heater {
  margin-top: 10px;
  height: 78px;
  padding: 4px 10px 0 4px;
}
.heater label {
  display: block;
  padding-left: 4px;
  font-size: 16px;
  line-height: 20px;
}
.heater-row {
  display: flex;
  gap: 14px;
  margin-top: 10px;
}
.heater .number {
  flex: none;
  width: 109px;
}
.heater .number input {
  padding-left: 6px;
}
.charts {
  flex: 1;
  min-width: 0;
}
.chart {
  display: block;
  width: 100%;
}
.browser .chart text {
  fill: #4c4c4c;
  stroke: none;
  font: 12px "Open Sans", sans-serif;
}
.browser .chart .title {
  font-size: 17px;
  text-anchor: middle;
}
.ylabel {
  text-anchor: end;
}
.xlabel {
  text-anchor: middle;
}
.grid line {
  stroke: #ececec;
  stroke-width: 1;
}
.zero {
  stroke: #666;
  stroke-width: 1;
}
.line {
  stroke-width: 2;
  stroke-linejoin: round;
}
.blue {
  stroke: #1f77b4;
}
.orange {
  stroke: #ff7f0e;
}
</style>
